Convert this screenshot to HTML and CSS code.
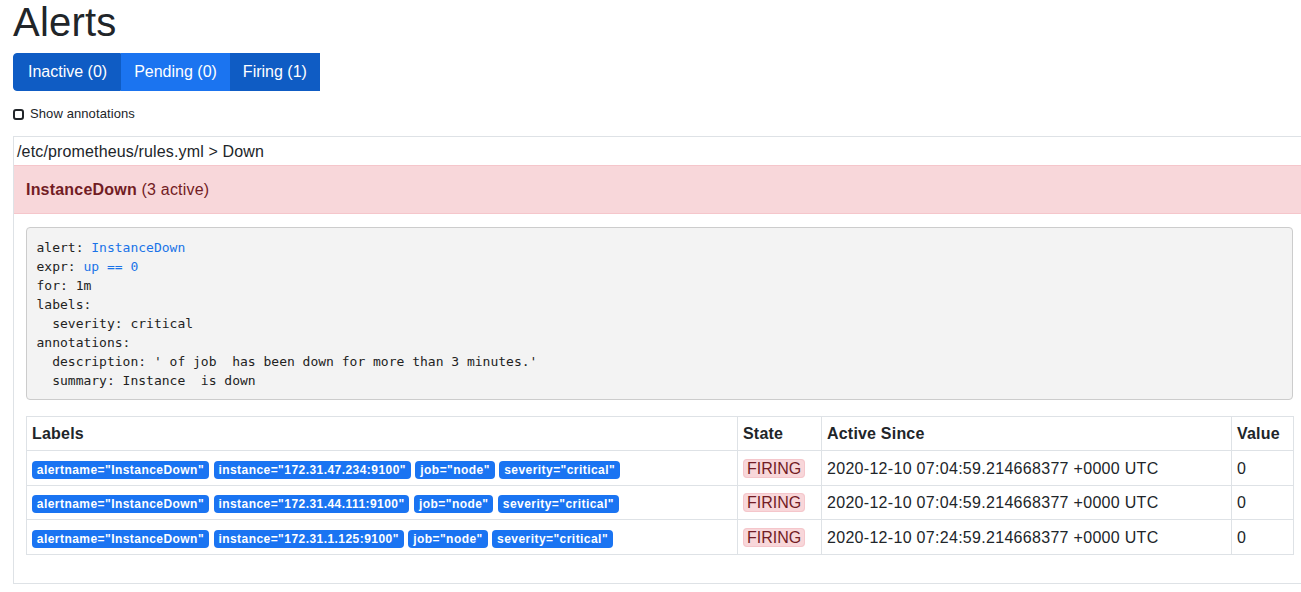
FILE: index.html
```html
<!DOCTYPE html>
<html>
<head>
<meta charset="utf-8">
<title>Alerts</title>
<link rel="stylesheet" href="styles.css">
</head>
<body>
<div class="page">
  <h1 class="title">Alerts</h1>
  <div class="btn-group">
    <button class="btn btn-dark">Inactive (0)</button>
    <button class="btn btn-light">Pending (0)</button>
    <button class="btn btn-dark">Firing (1)</button>
  </div>
  <label class="check-row"><span class="checkbox"></span><span>Show annotations</span></label>

  <div class="group">
    <div class="group-title">/etc/prometheus/rules.yml &gt; Down</div>
    <div class="alert-head"><strong>InstanceDown</strong> (3 active)</div>
    <div class="group-body">
<pre class="rule">alert: <span class="hl">InstanceDown</span>
expr: <span class="hl">up == 0</span>
for: 1m
labels:
  severity: critical
annotations:
  description: ' of job  has been down for more than 3 minutes.'
  summary: Instance  is down</pre>
      <table class="alerts">
        <colgroup>
          <col class="c-labels"><col class="c-state"><col class="c-since"><col class="c-value">
        </colgroup>
        <thead>
          <tr><th>Labels</th><th>State</th><th>Active Since</th><th>Value</th></tr>
        </thead>
        <tbody>
          <tr>
            <td><span class="badge">alertname="InstanceDown"</span> <span class="badge">instance="172.31.47.234:9100"</span> <span class="badge">job="node"</span> <span class="badge">severity="critical"</span></td>
            <td><span class="state">FIRING</span></td>
            <td>2020-12-10 07:04:59.214668377 +0000 UTC</td>
            <td>0</td>
          </tr>
          <tr>
            <td><span class="badge">alertname="InstanceDown"</span> <span class="badge">instance="172.31.44.111:9100"</span> <span class="badge">job="node"</span> <span class="badge">severity="critical"</span></td>
            <td><span class="state">FIRING</span></td>
            <td>2020-12-10 07:04:59.214668377 +0000 UTC</td>
            <td>0</td>
          </tr>
          <tr>
            <td><span class="badge">alertname="InstanceDown"</span> <span class="badge">instance="172.31.1.125:9100"</span> <span class="badge">job="node"</span> <span class="badge">severity="critical"</span></td>
            <td><span class="state">FIRING</span></td>
            <td>2020-12-10 07:24:59.214668377 +0000 UTC</td>
            <td>0</td>
          </tr>
        </tbody>
      </table>
    </div>
  </div>
</div>
</body>
</html>
```
FILE: styles.css
```css
html, body {
  margin: 0;
  padding: 0;
  overflow: hidden;
  background: #fff;
}
body {
  font-family: "Liberation Sans", Arial, sans-serif;
  font-size: 16px;
  line-height: 1.5;
  color: #212529;
  letter-spacing: 0.3px;
}
.page {
  padding: 0 0 0 13px;
}
.title {
  margin: 0 0 9px;
  font-size: 40px;
  line-height: 44px;
  font-weight: normal;
  letter-spacing: 0.2px;
}
.btn-group {
  display: flex;
}
.btn {
  font-family: inherit;
  font-size: 16px;
  line-height: 24px;
  letter-spacing: 0;
  padding: 6px 12px;
  border: 1px solid transparent;
  color: #fff;
  margin: 0;
  cursor: pointer;
}
.btn-dark {
  background: #0f5cc4;
  border-color: #0f5cc4;
}
.btn-dark:first-child {
  border-radius: 4px 0 0 4px;
  padding: 6px 13px 6px 14px;
}
.btn-light {
  background: #1b74f0;
  border-color: #1b74f0;
}
.check-row {
  display: flex;
  align-items: center;
  gap: 6px;
  margin: 14px 0 13px;
  font-size: 13px;
  line-height: 18px;
  letter-spacing: 0.1px;
}
.checkbox {
  width: 7px;
  height: 7px;
  border: 2px solid #212529;
  border-radius: 3px;
}
.group {
  width: 1293px;
  box-sizing: border-box;
  border: 1px solid #dee2e6;
}
.group-title {
  padding: 3px 3px 1px 3px;
  line-height: 24px;
  letter-spacing: 0.15px;
}
.alert-head {
  background: #f8d7da;
  border-top: 1px solid #f5c6cb;
  border-bottom: 1px solid #f5c6cb;
  color: #721c24;
  padding: 12px 12px 11px;
  line-height: 24px;
  letter-spacing: 0.2px;
}
.alert-head strong {
  font-weight: bold;
}
.group-body {
  padding: 12px 12px 12px;
}
.rule {
  margin: 1px 0 16px;
  padding: 9.5px 9.5px 9px;
  font-family: "DejaVu Sans Mono", monospace;
  font-size: 13px;
  line-height: 19px;
  letter-spacing: 0;
  color: #222;
  background: #f3f3f3;
  border: 1px solid #cccccc;
  border-radius: 4px;
}
.hl {
  color: #1a73e8;
}
.alerts {
  width: 1267px;
  table-layout: fixed;
  border-collapse: collapse;
  margin-bottom: 16px;
}
.c-labels { width: 711px; }
.c-state { width: 84px; }
.c-since { width: 410px; }
.c-value { width: 62px; }
.alerts th, .alerts td {
  border: 1px solid #dee2e6;
  padding: 5.5px 5px 4.1px;
  text-align: left;
  vertical-align: top;
  line-height: 24px;
  white-space: nowrap;
  overflow: hidden;
}
.alerts th {
  font-weight: bold;
  letter-spacing: 0.2px;
}
.badge {
  display: inline-block;
  background: #1a74f2;
  color: #fff;
  font-size: 12px;
  font-weight: bold;
  line-height: 1;
  letter-spacing: 0.45px;
  padding: 3px 4.8px;
  border-radius: 4px;
}
.state {
  background: #f8d7da;
  color: #721c24;
  border: 1px solid #f5c6cb;
  border-radius: 4px;
  padding: 0 3px;
  letter-spacing: 0;
}
```
